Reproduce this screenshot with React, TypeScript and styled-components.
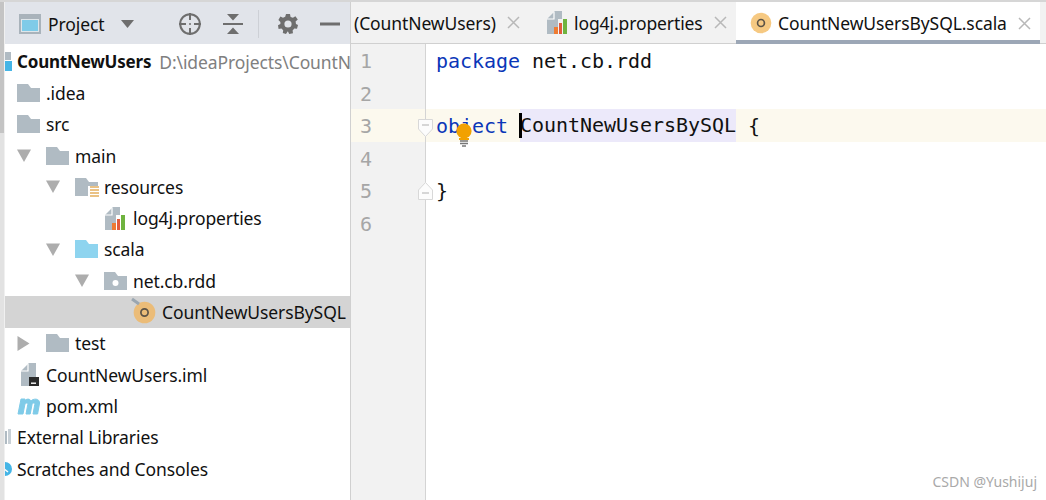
import React from 'react';
import styled, { createGlobalStyle } from 'styled-components';

const GlobalStyle = createGlobalStyle`
  html, body { margin: 0; padding: 0; background: #fff; }
`;

const Screen = styled.div`
  width: 1046px;
  height: 500px;
  position: relative;
  overflow: hidden;
  display: flex;
  box-sizing: border-box;
  border-top: 2px solid #d6d6d6;
  background: #fff;
  font-family: "Noto Sans", "Open Sans", sans-serif;
  letter-spacing: -0.1px;
  color: #111;
`;

const LeftStrip = styled.div`
  width: 5px;
  flex: none;
  box-sizing: border-box;
  border-right: 1px solid #f0f0f0;
  background: linear-gradient(#c4c4c4 0, #c4c4c4 131px, #e2e2e2 131px);
`;

const Sidebar = styled.div`
  width: 345px;
  flex: none;
  border-right: 1px solid #d0d0d0;
`;

const SideHeader = styled.div`
  height: 42px;
  background: #e1e4ea;
  display: flex;
  align-items: center;
  padding: 2px 0 0 14px;
  box-sizing: border-box;
`;

const HeaderTitle = styled.span`
  font-size: 17.5px;
  margin-left: 7px;
  width: 73px;
`;

const HeaderIcon = styled.svg<{ $gap?: number }>`
  flex: none;
  margin-left: ${p => p.$gap ?? 0}px;
  display: block;
`;

const HeaderSep = styled.div`
  width: 1px;
  height: 28px;
  background: #cdd0d6;
  margin-left: 15px;
`;

const Tree = styled.div`
  padding-top: 2px;
`;

const Row = styled.div<{ $level?: number; $selected?: boolean }>`
  height: 31.3px;
  display: flex;
  align-items: center;
  padding-left: ${p => 12 + 29 * (p.$level ?? 0)}px;
  background: ${p => (p.$selected ? '#d4d4d4' : 'transparent')};
  font-size: 17.5px;
  white-space: nowrap;
  overflow: hidden;
`;

const Slot = styled.div`
  width: 29px;
  flex: none;
  display: flex;
  align-items: center;
`;

const Clipped = styled.svg`
  flex: none;
  margin-left: -12px;
  display: block;
`;

const Bold = styled.span`
  font-size: 17px;
  font-weight: 700;
  letter-spacing: -0.2px;
`;

const ProjectPath = styled.span`
  color: #808080;
  margin-left: 8px;
`;

const Editor = styled.div`
  flex: 1;
  min-width: 0;
  display: flex;
  flex-direction: column;
`;

const TabBar = styled.div`
  height: 42px;
  flex: none;
  box-sizing: border-box;
  background: #f2f2f2;
  border-bottom: 1px solid #d0d0d0;
  display: flex;
  font-size: 17.5px;
  white-space: nowrap;
`;

const Tab = styled.div<{ $active?: boolean; $width: number; $pad: number }>`
  width: ${p => p.$width}px;
  flex: none;
  box-sizing: border-box;
  height: ${p => (p.$active ? '42px' : '41px')};
  padding-left: ${p => p.$pad}px;
  padding-top: ${p => (p.$active ? '4px' : '0')};
  display: flex;
  align-items: center;
  background: ${p => (p.$active ? '#fff' : 'transparent')};
  border-bottom: ${p => (p.$active ? '4px solid #9ca7b6' : '0')};
`;

const TabIcon = styled.div`
  flex: none;
  margin-right: 6px;
`;

const TabClose = styled.svg`
  flex: none;
  margin-left: 11px;
  display: block;
`;

const CodeArea = styled.div`
  flex: 1;
  display: flex;
  flex-direction: column;
  position: relative;
`;

const Line = styled.div<{ $current?: boolean; $fill?: boolean }>`
  height: ${p => (p.$fill ? 'auto' : '32.6px')};
  flex: ${p => (p.$fill ? '1' : 'none')};
  display: flex;
  background: ${p => (p.$current ? '#fcf9ee' : 'transparent')};
`;

const Gutter = styled.div<{ $current?: boolean }>`
  width: 75px;
  flex: none;
  box-sizing: border-box;
  background: ${p => (p.$current ? '#fcf9ee' : '#f2f2f2')};
  border-right: 1px solid #d4d4d4;
  padding: 1px 0 0 9px;
  color: #a6a6a6;
  font: 20px/32.6px "DejaVu Sans Mono", monospace;
`;

const Code = styled.div`
  padding: 1px 0 0 10px;
  font: 20px/32.6px "DejaVu Sans Mono", monospace;
  letter-spacing: -0.04px;
  color: #111;
  white-space: pre;
`;

const Keyword = styled.span`
  color: #0a36b8;
`;

const Usage = styled.span`
  background: #ece9fa;
  position: relative;
  display: inline-block;
  height: 32.6px;
  margin-top: -1px;
  vertical-align: top;
`;

const Caret = styled.span`
  position: absolute;
  left: -1px;
  top: 4px;
  width: 3px;
  height: 25px;
  background: #000;
`;

const FoldMark = styled.svg<{ $top: number }>`
  position: absolute;
  left: 67px;
  top: ${p => p.$top}px;
`;

const Bulb = styled.svg`
  position: absolute;
  left: 105px;
  top: 79px;
`;

const Watermark = styled.div`
  position: absolute;
  right: 9px;
  bottom: 9px;
  font-size: 14px;
  letter-spacing: 0;
  color: #a9a9a9;
`;

const Arrow = ({ open }: { open?: boolean }) => (
  <svg width="14" height="15" viewBox="0 0 14 15">
    {open ? <path d="M0 1.5H14L7 14Z" fill="#adadad" /> : <path d="M0.5 0V15L12.5 7.5Z" fill="#adadad" />}
  </svg>
);

const Folder = ({ color = '#b0bbc3', kind }: { color?: string; kind?: 'res' | 'pkg' }) => (
  <svg width="24" height="20" viewBox="0 0 24 20" style={{ display: 'block' }}>
    <path d="M0 1H11L14 5H23V19H0Z" fill={color} />
    {kind === 'pkg' && <circle cx="11.5" cy="12" r="3" fill="#fff" />}
    {kind === 'res' && (
      <g>
        <rect x="13" y="9" width="11" height="11" fill="#fff" />
        <path d="M15 10H24M15 13H24M15 16H24M15 19H24" stroke="#e4ae5e" strokeWidth="1.6" />
      </g>
    )}
  </svg>
);

const PropsFile = () => (
  <svg width="22" height="25" viewBox="0 0 22 25" style={{ display: 'block', flex: 'none' }}>
    <path d="M1 9L9 1H16V9H12V24H1Z" fill="#b0bbc3" />
    <path d="M1 9H8V2" fill="none" stroke="#fff" strokeWidth="1.2" />
    <rect x="8" y="17" width="4" height="7" fill="#ee7b32" />
    <rect x="13" y="13" width="3" height="11" fill="#e25b3c" />
    <rect x="17" y="9" width="4" height="15" fill="#6fb33f" />
  </svg>
);

const ClassIcon = ({ size = 23, pin, fill = '#ebbc78' }: { size?: number; pin?: boolean; fill?: string }) => (
  <svg width={size} height={size} viewBox="0 0 23 23" style={{ display: 'block', flex: 'none', overflow: 'visible' }}>
    <circle cx="11.5" cy="11.5" r="10.8" fill={fill} />
    <circle cx="11.5" cy="11.5" r="3.6" fill="none" stroke="#5c5346" strokeWidth="1.7" />
    {pin && <path d="M-1 -2L6 3" stroke="#9aa6b1" strokeWidth="3" />}
  </svg>
);

const ImlFile = () => (
  <svg width="23" height="25" viewBox="0 0 23 25" style={{ display: 'block', flex: 'none' }}>
    <path d="M4 9L12 1H19V15H12V24H4Z" fill="#b0bbc3" />
    <path d="M4 9H11V2" fill="none" stroke="#fff" strokeWidth="1.2" />
    <rect x="12" y="15" width="10" height="9" fill="#2b2b2b" />
    <rect x="14" y="20.5" width="5" height="1.4" fill="#fff" />
  </svg>
);

const PomIcon = () => (
  <svg width="24" height="20" viewBox="0 0 24 20" style={{ display: 'block' }}>
    <path
      d="M1 18L4 3H8L7.6 5C9 2.8 12.6 2.2 14 5C15.6 2.6 22.6 1.8 22.6 7L20.6 18H16L17.8 8.4C18 6.6 15.4 6.6 15 8.6L13.2 18H9L10.8 8.4C11 6.6 8.2 6.6 7.8 8.8L6 18Z"
      fill="#7fcbe8"
      stroke="#7fcbe8"
      strokeWidth="1"
    />
  </svg>
);

const CloseX = () => (
  <TabClose width="13" height="13" viewBox="0 0 13 13">
    <path d="M1 1L12 12M12 1L1 12" stroke="#b8b8b8" strokeWidth="1.5" />
  </TabClose>
);

export default function App() {
  return (
    <Screen>
      <GlobalStyle />
      <LeftStrip />
      <Sidebar>
        <SideHeader>
          <HeaderIcon width="22" height="20" viewBox="0 0 22 20">
            <rect x="1" y="1" width="20" height="18" fill="#dfe6ea" stroke="#a9b3bb" strokeWidth="2" />
            <rect x="1" y="1" width="20" height="4" fill="#a9b3bb" />
            <rect x="3" y="6" width="16" height="11" fill="#7fcbe8" />
          </HeaderIcon>
          <HeaderTitle>Project</HeaderTitle>
          <HeaderIcon width="13" height="8" viewBox="0 0 13 8">
            <path d="M0 0H13L6.5 8Z" fill="#6e6e6e" />
          </HeaderIcon>
          <HeaderIcon $gap={44} width="24" height="24" viewBox="0 0 24 24">
            <circle cx="12" cy="12" r="9.8" fill="none" stroke="#6e6e6e" strokeWidth="2" />
            <path d="M12 1V8M12 16V23M1 12H8M16 12H23" stroke="#6e6e6e" strokeWidth="2" />
            <circle cx="12" cy="12" r="1" fill="#6e6e6e" />
          </HeaderIcon>
          <HeaderIcon $gap={21} width="20" height="20" viewBox="0 0 20 20">
            <path d="M0 10H20" stroke="#6e6e6e" strokeWidth="2" />
            <path d="M4 0H16L10 6.5ZM4 20H16L10 13.5Z" fill="#6e6e6e" />
          </HeaderIcon>
          <HeaderSep />
          <HeaderIcon $gap={19} width="20" height="20" viewBox="0 0 20 20">
            <path
              fillRule="evenodd"
              d="M8 0H12L12.6 2.9L14.9 3.8L17.4 2.2L19.8 5.4L17.6 7.4L18 9.9L20 11L19 14.8L16.3 14.5L14.6 16.4L15 19.2L11.2 20L10 17.6H9.6L8 20L4.8 19L5.2 16.3L3.4 14.6L0.6 15L0 11.2L2.4 10V8L0.4 6L2.4 2.6L5 3.8L7.2 2.8ZM10 6.4A3.6 3.6 0 1 0 10 13.6A3.6 3.6 0 1 0 10 6.4Z"
              fill="#6e6e6e"
            />
          </HeaderIcon>
          <HeaderIcon $gap={22} width="20" height="4" viewBox="0 0 20 4">
            <rect width="20" height="3" y="0.5" fill="#6e6e6e" />
          </HeaderIcon>
        </SideHeader>
        <Tree>
          <Row>
            <Clipped width="12" height="20" viewBox="0 0 12 20">
              <rect x="0" y="0" width="6" height="8" fill="#b0bbc3" />
              <rect x="0" y="9" width="7" height="10" fill="#45b5e6" />
            </Clipped>
            <Bold>CountNewUsers</Bold>
            <ProjectPath>D:\ideaProjects\CountN</ProjectPath>
          </Row>
          <Row>
            <Slot><Folder /></Slot>
            .idea
          </Row>
          <Row>
            <Slot><Folder /></Slot>
            src
          </Row>
          <Row>
            <Slot><Arrow open /></Slot>
            <Slot><Folder /></Slot>
            main
          </Row>
          <Row $level={1}>
            <Slot><Arrow open /></Slot>
            <Slot><Folder kind="res" /></Slot>
            resources
          </Row>
          <Row $level={3}>
            <Slot><PropsFile /></Slot>
            log4j.properties
          </Row>
          <Row $level={1}>
            <Slot><Arrow open /></Slot>
            <Slot><Folder color="#8ed4ef" /></Slot>
            scala
          </Row>
          <Row $level={2}>
            <Slot><Arrow open /></Slot>
            <Slot><Folder kind="pkg" /></Slot>
            net.cb.rdd
          </Row>
          <Row $level={4} $selected>
            <Slot><ClassIcon pin /></Slot>
            CountNewUsersBySQL
          </Row>
          <Row>
            <Slot><Arrow /></Slot>
            <Slot><Folder /></Slot>
            test
          </Row>
          <Row>
            <Slot><ImlFile /></Slot>
            CountNewUsers.iml
          </Row>
          <Row>
            <Slot><PomIcon /></Slot>
            pom.xml
          </Row>
          <Row>
            <Clipped width="12" height="16" viewBox="0 0 12 16">
              <rect x="0" y="2" width="2" height="13" fill="#b0bbc3" />
              <rect x="3" y="0" width="3" height="15" fill="#c8d0d6" />
            </Clipped>
            External Libraries
          </Row>
          <Row>
            <Clipped width="12" height="16" viewBox="0 0 12 16">
              <circle cx="0" cy="8" r="7" fill="#45b5e6" />
              <path d="M-2 7L3 11" stroke="#fff" strokeWidth="1.5" />
            </Clipped>
            Scratches and Consoles
          </Row>
        </Tree>
      </Sidebar>
      <Editor>
        <TabBar>
          <Tab $width={195} $pad={3}>
            (CountNewUsers)
            <CloseX />
          </Tab>
          <Tab $width={190} $pad={0}>
            <TabIcon><PropsFile /></TabIcon>
            log4j.properties
            <CloseX />
          </Tab>
          <Tab $active $width={304} $pad={14}>
            <TabIcon><ClassIcon fill="#f6c982" size={22} /></TabIcon>
            CountNewUsersBySQL.scala
            <CloseX />
          </Tab>
        </TabBar>
        <CodeArea>
          <Line>
            <Gutter>1</Gutter>
            <Code><Keyword>package</Keyword> net.cb.rdd</Code>
          </Line>
          <Line>
            <Gutter>2</Gutter>
          </Line>
          <Line $current>
            <Gutter $current>3</Gutter>
            <Code>
              <Keyword>object</Keyword> <Usage><Caret />CountNewUsersBySQL</Usage> {'{'}
            </Code>
          </Line>
          <Line>
            <Gutter>4</Gutter>
          </Line>
          <Line>
            <Gutter>5</Gutter>
            <Code>{'}'}</Code>
          </Line>
          <Line>
            <Gutter>6</Gutter>
          </Line>
          <Line $fill>
            <Gutter />
          </Line>
          <FoldMark $top={75} width="15" height="18" viewBox="0 0 15 18">
            <path d="M0.5 0.5H14.5V10L7.5 17.5L0.5 10Z" fill="#fcfcfc" stroke="#d8d8d8" />
            <path d="M4 6H11" stroke="#b0b0b0" />
          </FoldMark>
          <FoldMark $top={138} width="15" height="18" viewBox="0 0 15 18">
            <path d="M0.5 17.5H14.5V8L7.5 0.5L0.5 8Z" fill="#fcfcfc" stroke="#d8d8d8" />
            <path d="M4 11H11" stroke="#b0b0b0" />
          </FoldMark>
          <Bulb width="16" height="24" viewBox="0 0 16 24">
            <circle cx="8" cy="8" r="7.6" fill="#f2a100" />
            <path d="M3 15H13V17H3Z" fill="#f2a100" />
            <path d="M4 18H12M4 20.5H12M6 23H10" stroke="#777" strokeWidth="1.3" />
          </Bulb>
        </CodeArea>
      </Editor>
      <Watermark>CSDN @Yushijuj</Watermark>
    </Screen>
  );
}
